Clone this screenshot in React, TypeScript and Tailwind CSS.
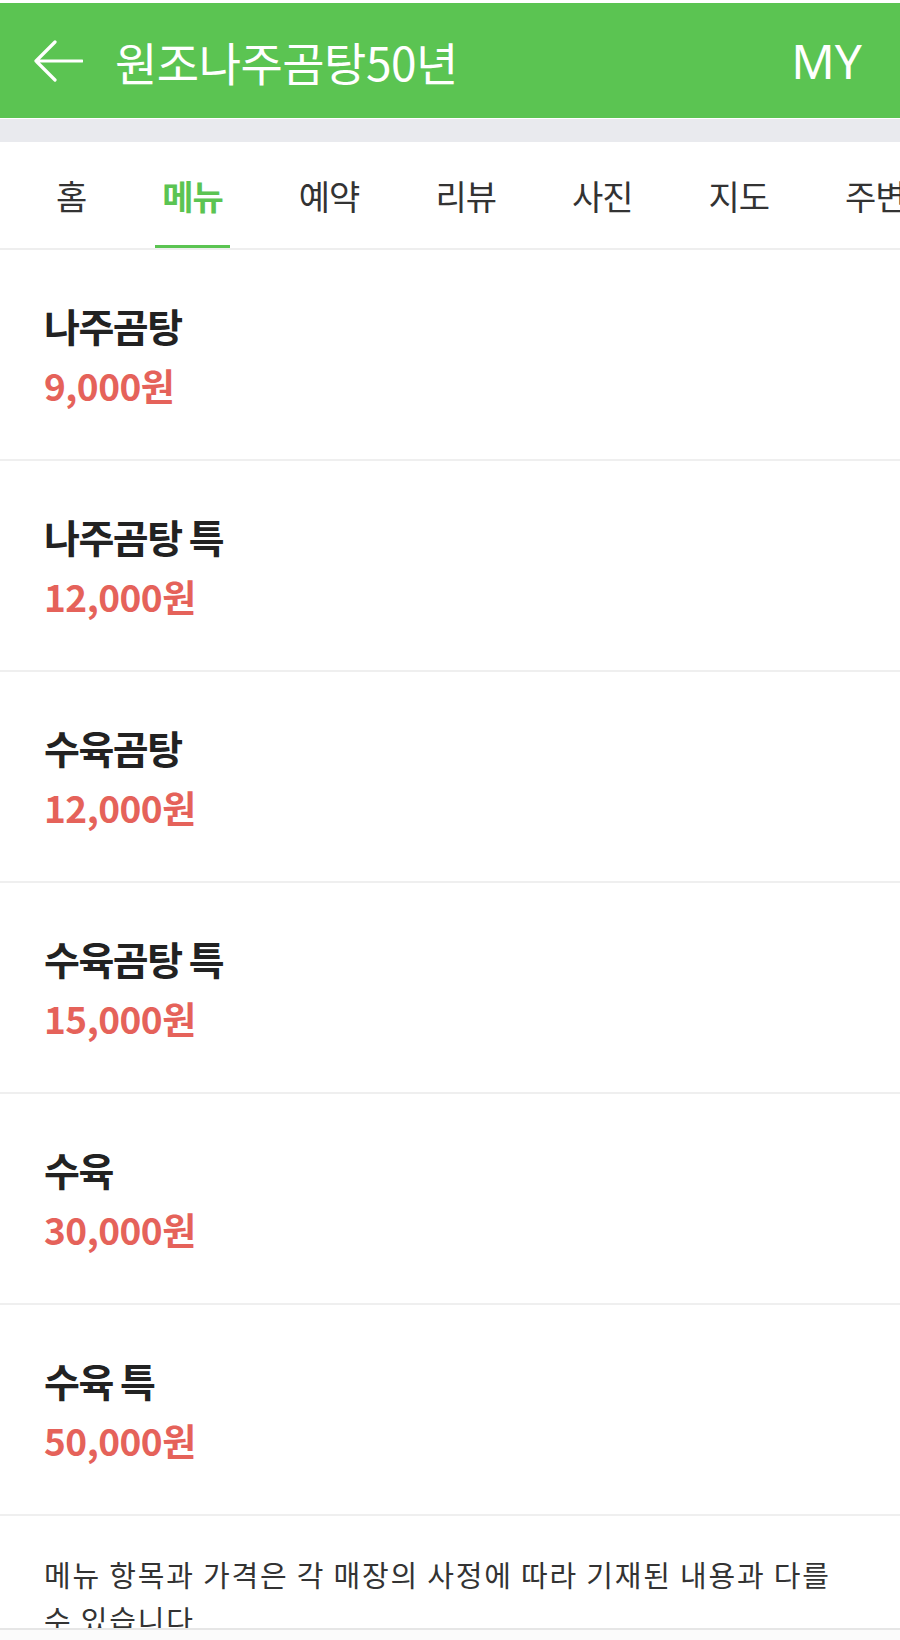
import React from "react";

const tabs = ["홈", "메뉴", "예약", "리뷰", "사진", "지도", "주변"];

const menu = [
  { name: "나주곰탕", price: "9,000원" },
  { name: "나주곰탕 특", price: "12,000원" },
  { name: "수육곰탕", price: "12,000원" },
  { name: "수육곰탕 특", price: "15,000원" },
  { name: "수육", price: "30,000원" },
  { name: "수육 특", price: "50,000원" },
];

export default function App() {
  return (
    <div className="w-[900px] h-[1640px] bg-white overflow-hidden flex flex-col font-['Noto_Sans_CJK_KR','Noto_Sans',sans-serif]">
      <div className="flex-1 overflow-hidden">
        <div className="h-[3px] bg-white" />

        {/* Header */}
        <header className="h-[115px] bg-[#5bc452] flex items-center pl-[33px] pr-[38px]">
          <svg width="50" height="42" viewBox="0 0 50 42" fill="none" className="shrink-0">
            <path
              d="M49 21H3M22 2L3 21L22 40"
              stroke="white"
              strokeWidth="3.2"
              strokeLinecap="round"
              strokeLinejoin="round"
            />
          </svg>
          <h1 className="ml-[32px] text-white text-[46px] tracking-[-0.5px] leading-none">원조나주곰탕50년</h1>
          <span className="ml-auto text-white text-[48px] leading-none font-['Noto_Sans',sans-serif]">MY</span>
        </header>

        <div className="h-px bg-white" />
        <div className="h-[23px] bg-[#e9eaee]" />

        {/* Tabs */}
        <nav className="h-[108px] flex pl-[18px] border-b-2 border-[#eeeeee] whitespace-nowrap overflow-hidden">
          {tabs.map((t) => {
            const active = t === "메뉴";
            return (
              <div key={t} className="relative shrink-0 h-full flex items-center px-[38px]">
                <span
                  className={`text-[34px] tracking-[-1px] ${
                    active ? "text-[#5bc452] font-bold" : "text-[#333333]"
                  }`}
                >
                  {t}
                </span>
                {active && (
                  <div className="absolute left-[31px] right-[31px] bottom-[-2px] h-[5px] bg-[#5bc452]" />
                )}
              </div>
            );
          })}
        </nav>

        {/* Menu list */}
        {menu.map((m) => (
          <div key={m.name} className="h-[211px] border-b-2 border-[#efefef] pl-[44px] pt-[45px]">
            <div className="text-[39px] leading-[60px] tracking-[-1.5px] font-bold text-[#222222]">{m.name}</div>
            <div className="text-[37px] leading-[60px] tracking-[-0.5px] font-bold text-[#e5625a]">{m.price}</div>
          </div>
        ))}

        <p className="pl-[44px] pr-[55px] pt-[36px] text-[29px] leading-[45px] tracking-[1.8px] text-[#333333] break-keep">
          메뉴 항목과 가격은 각 매장의 사정에 따라 기재된 내용과 다를 수 있습니다
        </p>
      </div>
      <div className="h-[2px] bg-[#e6e6e6]" />
      <div className="h-[10px] bg-[#fbfbfb]" />
    </div>
  );
}
